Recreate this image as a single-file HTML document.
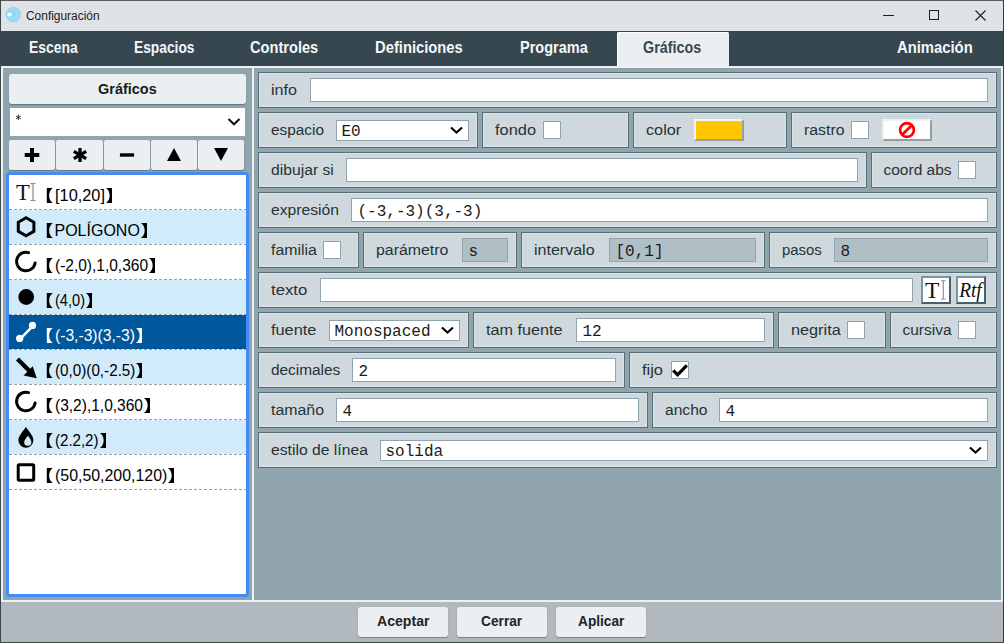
<!DOCTYPE html>
<html><head><meta charset="utf-8"><title>Configuración</title>
<style>html,body{margin:0;padding:0;width:1004px;height:643px;overflow:hidden;position:relative;font-family:"Liberation Sans",sans-serif}</style>
</head><body>
<div style="position:absolute;left:0px;top:0px;width:1004px;height:643px;background:#dfe2e7"></div>
<svg style="position:absolute;left:0;top:0" width="30" height="30"><circle cx="13.3" cy="14.6" r="7.6" fill="#8fd3f4"/><circle cx="13.3" cy="14.6" r="5.6" fill="none" stroke="#b6e3f8" stroke-width="0.8"/><circle cx="13.3" cy="14.6" r="3.6" fill="none" stroke="#b6e3f8" stroke-width="0.8"/><ellipse cx="9.6" cy="14.5" rx="2.4" ry="1.8" fill="#fff"/></svg>
<div style="position:absolute;left:883px;top:15px;width:11px;height:1px;background:#1b1b1b"></div>
<div style="position:absolute;left:929px;top:10px;width:10px;height:10px;box-sizing:border-box;border:1px solid #1b1b1b"></div>
<svg style="position:absolute;left:970;top:5px;left:970px" width="20" height="20"><path d="M5.5 5.5 L15.5 15.5 M15.5 5.5 L5.5 15.5" stroke="#1b1b1b" stroke-width="1.1"/></svg>
<div style="position:absolute;left:1px;top:31px;width:1002px;height:35px;background:#37474f"></div>
<div style="position:absolute;left:617px;top:32px;width:112px;height:34px;background:#eceff1;border-radius:2px 2px 0 0;box-shadow:inset 1px 1px 0 #fff"></div>
<div style="position:absolute;left:1px;top:66px;width:1002px;height:536px;background:#eef1f3"></div>
<div style="position:absolute;left:3px;top:68px;width:249px;height:532px;background:#90a4ae"></div>
<div style="position:absolute;left:254px;top:68px;width:747px;height:532px;background:#90a4ae"></div>
<div style="position:absolute;left:1px;top:602px;width:1002px;height:40px;background:#b1b8be"></div>
<div style="position:absolute;left:0px;top:0px;width:1004px;height:1px;background:#5a5a5a"></div>
<div style="position:absolute;left:0px;top:0px;width:1px;height:643px;background:#3c474c"></div>
<div style="position:absolute;left:1003px;top:0px;width:1px;height:643px;background:#1d3b6e"></div>
<div style="position:absolute;left:0px;top:642px;width:1004px;height:1px;background:#3c474c"></div>
<div style="position:absolute;left:9px;top:74px;width:237px;height:30px;background:#eceff1;border-radius:3px;box-shadow:0 1px 1px rgba(40,60,70,0.45)"></div>
<div style="position:absolute;left:10px;top:108px;width:235px;height:28px;background:#fff"></div>
<svg style="position:absolute;left:14px;top:113px" width="9" height="9"><g stroke="#222" stroke-width="0.9"><path d="M4.4 1.6 V7.2"/><path d="M2 3 L6.8 5.8"/><path d="M2 5.8 L6.8 3"/></g></svg>
<svg style="position:absolute;left:226px;top:115px" width="16" height="14"><path d="M2.5 4 L8 9.3 L13.5 4" fill="none" stroke="#111" stroke-width="2"/></svg>
<div style="position:absolute;left:9px;top:140px;width:46px;height:30px;background:#eceff1;border-radius:2px;box-shadow:0 1px 1px rgba(40,60,70,0.45)"></div>
<div style="position:absolute;left:56px;top:140px;width:47px;height:30px;background:#eceff1;border-radius:2px;box-shadow:0 1px 1px rgba(40,60,70,0.45)"></div>
<div style="position:absolute;left:104px;top:140px;width:46px;height:30px;background:#eceff1;border-radius:2px;box-shadow:0 1px 1px rgba(40,60,70,0.45)"></div>
<div style="position:absolute;left:151px;top:140px;width:46px;height:30px;background:#eceff1;border-radius:2px;box-shadow:0 1px 1px rgba(40,60,70,0.45)"></div>
<div style="position:absolute;left:198px;top:140px;width:46px;height:30px;background:#eceff1;border-radius:2px;box-shadow:0 1px 1px rgba(40,60,70,0.45)"></div>
<svg style="position:absolute;left:20.0px;top:143px" width="24" height="24"><g transform="translate(12 12)"><path d="M-7.3 0 H7.3 M0 -6.9 V6.9" stroke="#000" stroke-width="4"/></g></svg>
<svg style="position:absolute;left:67.5px;top:143px" width="24" height="24"><g transform="translate(12 12)"><g stroke="#000" stroke-width="3.3"><path d="M0 -7 V7"/><path d="M-6.2 -3.6 L6.2 3.6"/><path d="M-6.2 3.6 L6.2 -3.6"/></g></g></svg>
<svg style="position:absolute;left:115.0px;top:143px" width="24" height="24"><g transform="translate(12 12)"><path d="M-7.1 0 H7.1" stroke="#000" stroke-width="3.4"/></g></svg>
<svg style="position:absolute;left:162.0px;top:143px" width="24" height="24"><g transform="translate(12 12)"><path d="M-7 6 L7 6 L0 -7 Z" fill="#000"/></g></svg>
<svg style="position:absolute;left:209.0px;top:143px" width="24" height="24"><g transform="translate(12 12)"><path d="M-7 -7 L7 -7 L0 6 Z" fill="#000"/></g></svg>
<div style="position:absolute;left:6px;top:172px;width:243px;height:425px;box-sizing:border-box;border:3px solid #458bf6;border-radius:4px;background:#fff"></div>
<div style="position:absolute;left:9px;top:175px;width:237px;height:34px;background:#fff"></div>
<div style="position:absolute;left:9px;top:209px;width:237px;height:1px;background:repeating-linear-gradient(90deg,#93a2a9 0 3px,transparent 3px 5px)"></div>
<svg style="position:absolute;left:46px;top:188px" width="8" height="16"><path d="M0.8 0 H6.8 C 1.9 3.5, 1.9 11.5, 6.8 15 H0.8 Z" fill="#000"/></svg>
<svg style="position:absolute;left:105px;top:188px" width="8" height="16"><path d="M7 0 H1 C 5.9 3.5, 5.9 11.5, 1 15 H7 Z" fill="#000"/></svg>
<div style="position:absolute;left:9px;top:210px;width:237px;height:34px;background:#d1ebfa"></div>
<div style="position:absolute;left:9px;top:244px;width:237px;height:1px;background:repeating-linear-gradient(90deg,#93a2a9 0 3px,transparent 3px 5px)"></div>
<svg style="position:absolute;left:46px;top:223px" width="8" height="16"><path d="M0.8 0 H6.8 C 1.9 3.5, 1.9 11.5, 6.8 15 H0.8 Z" fill="#000"/></svg>
<svg style="position:absolute;left:140px;top:223px" width="8" height="16"><path d="M7 0 H1 C 5.9 3.5, 5.9 11.5, 1 15 H7 Z" fill="#000"/></svg>
<div style="position:absolute;left:9px;top:245px;width:237px;height:34px;background:#fff"></div>
<div style="position:absolute;left:9px;top:279px;width:237px;height:1px;background:repeating-linear-gradient(90deg,#93a2a9 0 3px,transparent 3px 5px)"></div>
<svg style="position:absolute;left:46px;top:258px" width="8" height="16"><path d="M0.8 0 H6.8 C 1.9 3.5, 1.9 11.5, 6.8 15 H0.8 Z" fill="#000"/></svg>
<svg style="position:absolute;left:148px;top:258px" width="8" height="16"><path d="M7 0 H1 C 5.9 3.5, 5.9 11.5, 1 15 H7 Z" fill="#000"/></svg>
<div style="position:absolute;left:9px;top:280px;width:237px;height:34px;background:#d1ebfa"></div>
<div style="position:absolute;left:9px;top:314px;width:237px;height:1px;background:repeating-linear-gradient(90deg,#93a2a9 0 3px,transparent 3px 5px)"></div>
<svg style="position:absolute;left:46px;top:293px" width="8" height="16"><path d="M0.8 0 H6.8 C 1.9 3.5, 1.9 11.5, 6.8 15 H0.8 Z" fill="#000"/></svg>
<svg style="position:absolute;left:85px;top:293px" width="8" height="16"><path d="M7 0 H1 C 5.9 3.5, 5.9 11.5, 1 15 H7 Z" fill="#000"/></svg>
<div style="position:absolute;left:9px;top:315px;width:237px;height:34px;background:#01579b"></div>
<div style="position:absolute;left:9px;top:349px;width:237px;height:1px;background:repeating-linear-gradient(90deg,#93a2a9 0 3px,transparent 3px 5px)"></div>
<svg style="position:absolute;left:46px;top:328px" width="8" height="16"><path d="M0.8 0 H6.8 C 1.9 3.5, 1.9 11.5, 6.8 15 H0.8 Z" fill="#fff"/></svg>
<svg style="position:absolute;left:134.9px;top:328px" width="8" height="16"><path d="M7 0 H1 C 5.9 3.5, 5.9 11.5, 1 15 H7 Z" fill="#fff"/></svg>
<div style="position:absolute;left:9px;top:350px;width:237px;height:34px;background:#d1ebfa"></div>
<div style="position:absolute;left:9px;top:384px;width:237px;height:1px;background:repeating-linear-gradient(90deg,#93a2a9 0 3px,transparent 3px 5px)"></div>
<svg style="position:absolute;left:46px;top:363px" width="8" height="16"><path d="M0.8 0 H6.8 C 1.9 3.5, 1.9 11.5, 6.8 15 H0.8 Z" fill="#000"/></svg>
<svg style="position:absolute;left:135.4px;top:363px" width="8" height="16"><path d="M7 0 H1 C 5.9 3.5, 5.9 11.5, 1 15 H7 Z" fill="#000"/></svg>
<div style="position:absolute;left:9px;top:385px;width:237px;height:34px;background:#fff"></div>
<div style="position:absolute;left:9px;top:419px;width:237px;height:1px;background:repeating-linear-gradient(90deg,#93a2a9 0 3px,transparent 3px 5px)"></div>
<svg style="position:absolute;left:46px;top:398px" width="8" height="16"><path d="M0.8 0 H6.8 C 1.9 3.5, 1.9 11.5, 6.8 15 H0.8 Z" fill="#000"/></svg>
<svg style="position:absolute;left:143px;top:398px" width="8" height="16"><path d="M7 0 H1 C 5.9 3.5, 5.9 11.5, 1 15 H7 Z" fill="#000"/></svg>
<div style="position:absolute;left:9px;top:420px;width:237px;height:34px;background:#d1ebfa"></div>
<div style="position:absolute;left:9px;top:454px;width:237px;height:1px;background:repeating-linear-gradient(90deg,#93a2a9 0 3px,transparent 3px 5px)"></div>
<svg style="position:absolute;left:46px;top:433px" width="8" height="16"><path d="M0.8 0 H6.8 C 1.9 3.5, 1.9 11.5, 6.8 15 H0.8 Z" fill="#000"/></svg>
<svg style="position:absolute;left:98.5px;top:433px" width="8" height="16"><path d="M7 0 H1 C 5.9 3.5, 5.9 11.5, 1 15 H7 Z" fill="#000"/></svg>
<div style="position:absolute;left:9px;top:455px;width:237px;height:34px;background:#fff"></div>
<div style="position:absolute;left:9px;top:489px;width:237px;height:1px;background:repeating-linear-gradient(90deg,#93a2a9 0 3px,transparent 3px 5px)"></div>
<svg style="position:absolute;left:46px;top:468px" width="8" height="16"><path d="M0.8 0 H6.8 C 1.9 3.5, 1.9 11.5, 6.8 15 H0.8 Z" fill="#000"/></svg>
<svg style="position:absolute;left:167.3px;top:468px" width="8" height="16"><path d="M7 0 H1 C 5.9 3.5, 5.9 11.5, 1 15 H7 Z" fill="#000"/></svg>
<svg style="position:absolute;left:9px;top:175px" width="36" height="34"><text x="6.9" y="25" font-family="Liberation Serif" font-size="22.5" fill="#111">T</text><path d="M21.5 8.5 H26.5 M24 8.5 V25.5 M21.5 25.5 H26.5" stroke="#8c8c8c" stroke-width="1.2" fill="none"/></svg>
<svg style="position:absolute;left:9px;top:210px" width="36" height="34"><path d="M17.1 7.8 L24.9 12.3 L24.9 21.3 L17.1 25.8 L9.3 21.3 L9.3 12.3 Z" fill="none" stroke="#000" stroke-width="3" stroke-linejoin="miter"/></svg>
<svg style="position:absolute;left:9px;top:245px" width="36" height="34"><path d="M19.6 7.6 A9.3 9.3 0 1 0 26.1 17.9" fill="none" stroke="#000" stroke-width="3" stroke-linecap="round"/></svg>
<svg style="position:absolute;left:9px;top:280px" width="36" height="34"><circle cx="17.2" cy="17" r="7.9" fill="#000"/></svg>
<svg style="position:absolute;left:9px;top:315px" width="36" height="34"><path d="M10.7 24.4 L23.5 11.4" stroke="#fff" stroke-width="2.6"/><circle cx="10.7" cy="23.4" r="3.6" fill="#fff"/><circle cx="23.5" cy="10.4" r="3.6" fill="#fff"/></svg>
<svg style="position:absolute;left:9px;top:350px" width="36" height="34"><path d="M8.5 9 L20 20.5" stroke="#000" stroke-width="4.2"/><path d="M14.6 25.6 L23.7 16.3 L27.7 28.3 Z" fill="#000"/></svg>
<svg style="position:absolute;left:9px;top:385px" width="36" height="34"><path d="M19.6 7.6 A9.3 9.3 0 1 0 26.1 17.9" fill="none" stroke="#000" stroke-width="3" stroke-linecap="round"/></svg>
<svg style="position:absolute;left:9px;top:420px" width="36" height="34"><path d="M16.9 7 C 13 12.5, 9.4 16.5, 9.4 20.2 A7.5 7.5 0 0 0 24.4 20.2 C 24.4 16.5, 20.8 12.5, 16.9 7 Z" fill="#000"/><path d="M19 15.8 C 17 18.5, 15.2 20.2, 15.2 22.2 A3.6 3.6 0 0 0 22.4 22.2 C 22.4 20.2, 20.9 18.5, 19 15.8 Z" fill="#d1ebfa"/></svg>
<svg style="position:absolute;left:9px;top:455px" width="36" height="34"><rect x="9.2" y="9.8" width="15.5" height="15.5" rx="1" fill="none" stroke="#000" stroke-width="3"/></svg>
<div style="position:absolute;left:258px;top:72px;width:739px;height:36px;box-sizing:border-box;background:#cfd8dc;border:1px solid #546e7a;box-shadow:inset 1px 1px 0 #dde4e7, inset -1px -1px 0 #dde4e7"></div>
<div style="position:absolute;left:310px;top:78px;width:678px;height:24px;box-sizing:border-box;background:#fff;border:1px solid #90a4ae"></div>
<div style="position:absolute;left:258px;top:112px;width:220px;height:36px;box-sizing:border-box;background:#cfd8dc;border:1px solid #546e7a;box-shadow:inset 1px 1px 0 #dde4e7, inset -1px -1px 0 #dde4e7"></div>
<div style="position:absolute;left:336px;top:120px;width:133px;height:21px;box-sizing:border-box;background:#fff;border:1px solid #90a4ae"></div>
<svg style="position:absolute;left:449px;top:124px" width="16" height="14"><path d="M2 3.5 L7.5 8.5 L13 3.5" fill="none" stroke="#000" stroke-width="2.1"/></svg>
<div style="position:absolute;left:482px;top:112px;width:147px;height:36px;box-sizing:border-box;background:#cfd8dc;border:1px solid #546e7a;box-shadow:inset 1px 1px 0 #dde4e7, inset -1px -1px 0 #dde4e7"></div>
<div style="position:absolute;left:543px;top:121px;width:18px;height:18px;box-sizing:border-box;background:#fff;border:1px solid #90a4ae"></div>
<div style="position:absolute;left:633px;top:112px;width:154px;height:36px;box-sizing:border-box;background:#cfd8dc;border:1px solid #546e7a;box-shadow:inset 1px 1px 0 #dde4e7, inset -1px -1px 0 #dde4e7"></div>
<div style="position:absolute;left:694px;top:119px;width:50px;height:22px;box-sizing:border-box;background:#ffc600;border:2px solid;border-color:#f2f4f7 #989ea4 #989ea4 #f2f4f7"></div>
<div style="position:absolute;left:791px;top:112px;width:206px;height:36px;box-sizing:border-box;background:#cfd8dc;border:1px solid #546e7a;box-shadow:inset 1px 1px 0 #dde4e7, inset -1px -1px 0 #dde4e7"></div>
<div style="position:absolute;left:851px;top:121px;width:18px;height:18px;box-sizing:border-box;background:#fff;border:1px solid #90a4ae"></div>
<div style="position:absolute;left:882px;top:119px;width:50px;height:22px;box-sizing:border-box;background:#fff;border:2px solid;border-color:#eef0f1 #9a9c9e #9a9c9e #eef0f1"></div>
<svg style="position:absolute;left:897px;top:120px" width="20" height="20"><circle cx="10" cy="10" r="6.9" fill="none" stroke="#f00" stroke-width="2.7"/><path d="M14.8 5.2 L5.2 14.8" stroke="#f00" stroke-width="2.7"/></svg>
<div style="position:absolute;left:258px;top:152px;width:609px;height:36px;box-sizing:border-box;background:#cfd8dc;border:1px solid #546e7a;box-shadow:inset 1px 1px 0 #dde4e7, inset -1px -1px 0 #dde4e7"></div>
<div style="position:absolute;left:346px;top:158px;width:512px;height:24px;box-sizing:border-box;background:#fff;border:1px solid #90a4ae"></div>
<div style="position:absolute;left:871px;top:152px;width:126px;height:36px;box-sizing:border-box;background:#cfd8dc;border:1px solid #546e7a;box-shadow:inset 1px 1px 0 #dde4e7, inset -1px -1px 0 #dde4e7"></div>
<div style="position:absolute;left:958px;top:161px;width:18px;height:18px;box-sizing:border-box;background:#fff;border:1px solid #90a4ae"></div>
<div style="position:absolute;left:258px;top:192px;width:739px;height:36px;box-sizing:border-box;background:#cfd8dc;border:1px solid #546e7a;box-shadow:inset 1px 1px 0 #dde4e7, inset -1px -1px 0 #dde4e7"></div>
<div style="position:absolute;left:351px;top:198px;width:637px;height:24px;box-sizing:border-box;background:#fff;border:1px solid #90a4ae"></div>
<div style="position:absolute;left:258px;top:232px;width:101px;height:36px;box-sizing:border-box;background:#cfd8dc;border:1px solid #546e7a;box-shadow:inset 1px 1px 0 #dde4e7, inset -1px -1px 0 #dde4e7"></div>
<div style="position:absolute;left:323px;top:241px;width:18px;height:18px;box-sizing:border-box;background:#fff;border:1px solid #90a4ae"></div>
<div style="position:absolute;left:363px;top:232px;width:154px;height:36px;box-sizing:border-box;background:#cfd8dc;border:1px solid #546e7a;box-shadow:inset 1px 1px 0 #dde4e7, inset -1px -1px 0 #dde4e7"></div>
<div style="position:absolute;left:462px;top:238px;width:46px;height:24px;box-sizing:border-box;background:#b0bec5;border:1px solid #90a4ae"></div>
<div style="position:absolute;left:521px;top:232px;width:244px;height:36px;box-sizing:border-box;background:#cfd8dc;border:1px solid #546e7a;box-shadow:inset 1px 1px 0 #dde4e7, inset -1px -1px 0 #dde4e7"></div>
<div style="position:absolute;left:609px;top:238px;width:147px;height:24px;box-sizing:border-box;background:#b0bec5;border:1px solid #90a4ae"></div>
<div style="position:absolute;left:769px;top:232px;width:228px;height:36px;box-sizing:border-box;background:#cfd8dc;border:1px solid #546e7a;box-shadow:inset 1px 1px 0 #dde4e7, inset -1px -1px 0 #dde4e7"></div>
<div style="position:absolute;left:834px;top:238px;width:154px;height:24px;box-sizing:border-box;background:#b0bec5;border:1px solid #90a4ae"></div>
<div style="position:absolute;left:258px;top:272px;width:739px;height:36px;box-sizing:border-box;background:#cfd8dc;border:1px solid #546e7a;box-shadow:inset 1px 1px 0 #dde4e7, inset -1px -1px 0 #dde4e7"></div>
<div style="position:absolute;left:320px;top:278px;width:593px;height:24px;box-sizing:border-box;background:#fff;border:1px solid #90a4ae"></div>
<div style="position:absolute;left:921px;top:276px;width:30px;height:28px;box-sizing:border-box;background:#fff;border:2px solid;border-color:#7d95a0 #4a5f69 #4a5f69 #7d95a0"></div>
<svg style="position:absolute;left:921px;top:276px" width="30" height="28"><text x="4" y="21.6" font-family="Liberation Serif" font-size="23.5" fill="#111">T</text><path d="M20 4.8 H24.5 M22.3 4.8 V23 M20 23 H24.5" stroke="#8a8a8a" stroke-width="1.1" fill="none"/></svg>
<div style="position:absolute;left:956px;top:276px;width:30px;height:28px;box-sizing:border-box;background:#fff;border:2px solid;border-color:#7d95a0 #4a5f69 #4a5f69 #7d95a0"></div>
<svg style="position:absolute;left:956px;top:276px" width="30" height="28"><text x="3.2" y="21" font-family="Liberation Serif" font-style="italic" font-size="20" fill="#111" textLength="22.5" lengthAdjust="spacingAndGlyphs">Rtf</text></svg>
<div style="position:absolute;left:258px;top:312px;width:211px;height:36px;box-sizing:border-box;background:#cfd8dc;border:1px solid #546e7a;box-shadow:inset 1px 1px 0 #dde4e7, inset -1px -1px 0 #dde4e7"></div>
<div style="position:absolute;left:329px;top:320px;width:131px;height:21px;box-sizing:border-box;background:#fff;border:1px solid #90a4ae"></div>
<svg style="position:absolute;left:440px;top:324px" width="16" height="14"><path d="M2 3.5 L7.5 8.5 L13 3.5" fill="none" stroke="#000" stroke-width="2.1"/></svg>
<div style="position:absolute;left:473px;top:312px;width:301px;height:36px;box-sizing:border-box;background:#cfd8dc;border:1px solid #546e7a;box-shadow:inset 1px 1px 0 #dde4e7, inset -1px -1px 0 #dde4e7"></div>
<div style="position:absolute;left:576px;top:318px;width:189px;height:24px;box-sizing:border-box;background:#fff;border:1px solid #90a4ae"></div>
<div style="position:absolute;left:778px;top:312px;width:108px;height:36px;box-sizing:border-box;background:#cfd8dc;border:1px solid #546e7a;box-shadow:inset 1px 1px 0 #dde4e7, inset -1px -1px 0 #dde4e7"></div>
<div style="position:absolute;left:847px;top:321px;width:18px;height:18px;box-sizing:border-box;background:#fff;border:1px solid #90a4ae"></div>
<div style="position:absolute;left:890px;top:312px;width:107px;height:36px;box-sizing:border-box;background:#cfd8dc;border:1px solid #546e7a;box-shadow:inset 1px 1px 0 #dde4e7, inset -1px -1px 0 #dde4e7"></div>
<div style="position:absolute;left:958px;top:321px;width:18px;height:18px;box-sizing:border-box;background:#fff;border:1px solid #90a4ae"></div>
<div style="position:absolute;left:258px;top:352px;width:367px;height:36px;box-sizing:border-box;background:#cfd8dc;border:1px solid #546e7a;box-shadow:inset 1px 1px 0 #dde4e7, inset -1px -1px 0 #dde4e7"></div>
<div style="position:absolute;left:352px;top:358px;width:264px;height:24px;box-sizing:border-box;background:#fff;border:1px solid #90a4ae"></div>
<div style="position:absolute;left:629px;top:352px;width:368px;height:36px;box-sizing:border-box;background:#cfd8dc;border:1px solid #546e7a;box-shadow:inset 1px 1px 0 #dde4e7, inset -1px -1px 0 #dde4e7"></div>
<div style="position:absolute;left:671px;top:361px;width:18px;height:18px;box-sizing:border-box;background:#fff;border:1px solid #90a4ae"></div>
<svg style="position:absolute;left:671px;top:361px" width="18" height="18"><path d="M2.2 9.3 L6.6 13.8 L15.8 4.3" fill="none" stroke="#000" stroke-width="3.2"/></svg>
<div style="position:absolute;left:258px;top:392px;width:390px;height:36px;box-sizing:border-box;background:#cfd8dc;border:1px solid #546e7a;box-shadow:inset 1px 1px 0 #dde4e7, inset -1px -1px 0 #dde4e7"></div>
<div style="position:absolute;left:336px;top:398px;width:303px;height:24px;box-sizing:border-box;background:#fff;border:1px solid #90a4ae"></div>
<div style="position:absolute;left:652px;top:392px;width:345px;height:36px;box-sizing:border-box;background:#cfd8dc;border:1px solid #546e7a;box-shadow:inset 1px 1px 0 #dde4e7, inset -1px -1px 0 #dde4e7"></div>
<div style="position:absolute;left:719px;top:398px;width:269px;height:24px;box-sizing:border-box;background:#fff;border:1px solid #90a4ae"></div>
<div style="position:absolute;left:258px;top:432px;width:739px;height:36px;box-sizing:border-box;background:#cfd8dc;border:1px solid #546e7a;box-shadow:inset 1px 1px 0 #dde4e7, inset -1px -1px 0 #dde4e7"></div>
<div style="position:absolute;left:380px;top:440px;width:608px;height:21px;box-sizing:border-box;background:#fff;border:1px solid #90a4ae"></div>
<svg style="position:absolute;left:968px;top:444px" width="16" height="14"><path d="M2 3.5 L7.5 8.5 L13 3.5" fill="none" stroke="#000" stroke-width="2.1"/></svg>
<div style="position:absolute;left:358px;top:607px;width:90px;height:30px;background:#eceff1;border-radius:3px;box-shadow:0 1px 1px rgba(40,60,70,0.45)"></div>
<div style="position:absolute;left:457px;top:607px;width:90px;height:30px;background:#eceff1;border-radius:3px;box-shadow:0 1px 1px rgba(40,60,70,0.45)"></div>
<div style="position:absolute;left:556px;top:607px;width:90px;height:30px;background:#eceff1;border-radius:3px;box-shadow:0 1px 1px rgba(40,60,70,0.45)"></div>
<div style="position:absolute;left:25.80px;top:9.54px;font-family:'Liberation Sans', sans-serif;font-size:12px;font-weight:400;color:#1b1b1b;white-space:pre;line-height:1;transform:scaleX(0.9940);transform-origin:0 0">Configuración</div>
<div style="position:absolute;left:28.70px;top:39.23px;font-family:'Liberation Sans', sans-serif;font-size:16.5px;font-weight:700;color:#f5f7f8;white-space:pre;line-height:1;transform:scaleX(0.8426);transform-origin:0 0">Escena</div>
<div style="position:absolute;left:134.00px;top:39.23px;font-family:'Liberation Sans', sans-serif;font-size:16.5px;font-weight:700;color:#f5f7f8;white-space:pre;line-height:1;transform:scaleX(0.8348);transform-origin:0 0">Espacios</div>
<div style="position:absolute;left:250.30px;top:39.23px;font-family:'Liberation Sans', sans-serif;font-size:16.5px;font-weight:700;color:#f5f7f8;white-space:pre;line-height:1;transform:scaleX(0.8855);transform-origin:0 0">Controles</div>
<div style="position:absolute;left:375.40px;top:39.23px;font-family:'Liberation Sans', sans-serif;font-size:16.5px;font-weight:700;color:#f5f7f8;white-space:pre;line-height:1;transform:scaleX(0.8949);transform-origin:0 0">Definiciones</div>
<div style="position:absolute;left:519.50px;top:39.23px;font-family:'Liberation Sans', sans-serif;font-size:16.5px;font-weight:700;color:#f5f7f8;white-space:pre;line-height:1;transform:scaleX(0.8802);transform-origin:0 0">Programa</div>
<div style="position:absolute;left:643.40px;top:39.23px;font-family:'Liberation Sans', sans-serif;font-size:16.5px;font-weight:700;color:#37474f;white-space:pre;line-height:1;transform:scaleX(0.8678);transform-origin:0 0">Gráficos</div>
<div style="position:absolute;left:897.10px;top:39.23px;font-family:'Liberation Sans', sans-serif;font-size:16.5px;font-weight:700;color:#f5f7f8;white-space:pre;line-height:1;transform:scaleX(0.8974);transform-origin:0 0">Animación</div>
<div style="position:absolute;left:97.50px;top:80.68px;font-family:'Liberation Sans', sans-serif;font-size:15.5px;font-weight:700;color:#161c20;white-space:pre;line-height:1;transform:scaleX(0.9334);transform-origin:0 0">Gráficos</div>
<div style="position:absolute;left:54.50px;top:187.75px;font-family:'Liberation Sans', sans-serif;font-size:16px;font-weight:400;color:#000;white-space:pre;line-height:1;transform:scaleX(1.0217);transform-origin:0 0">[10,20]</div>
<div style="position:absolute;left:54.50px;top:222.75px;font-family:'Liberation Sans', sans-serif;font-size:16px;font-weight:400;color:#000;white-space:pre;line-height:1">POLÍGONO</div>
<div style="position:absolute;left:54.50px;top:257.75px;font-family:'Liberation Sans', sans-serif;font-size:16px;font-weight:400;color:#000;white-space:pre;line-height:1;transform:scaleX(0.9681);transform-origin:0 0">(-2,0),1,0,360</div>
<div style="position:absolute;left:54.50px;top:292.75px;font-family:'Liberation Sans', sans-serif;font-size:16px;font-weight:400;color:#000;white-space:pre;line-height:1;transform:scaleX(0.9117);transform-origin:0 0">(4,0)</div>
<div style="position:absolute;left:54.50px;top:327.75px;font-family:'Liberation Sans', sans-serif;font-size:16px;font-weight:400;color:#fff;white-space:pre;line-height:1;transform:scaleX(0.9770);transform-origin:0 0">(-3,-3)(3,-3)</div>
<div style="position:absolute;left:54.50px;top:362.75px;font-family:'Liberation Sans', sans-serif;font-size:16px;font-weight:400;color:#000;white-space:pre;line-height:1;transform:scaleX(0.9518);transform-origin:0 0">(0,0)(0,-2.5)</div>
<div style="position:absolute;left:54.50px;top:397.75px;font-family:'Liberation Sans', sans-serif;font-size:16px;font-weight:400;color:#000;white-space:pre;line-height:1;transform:scaleX(0.9699);transform-origin:0 0">(3,2),1,0,360</div>
<div style="position:absolute;left:54.50px;top:432.75px;font-family:'Liberation Sans', sans-serif;font-size:16px;font-weight:400;color:#000;white-space:pre;line-height:1;transform:scaleX(0.9405);transform-origin:0 0">(2.2,2)</div>
<div style="position:absolute;left:54.50px;top:467.75px;font-family:'Liberation Sans', sans-serif;font-size:16px;font-weight:400;color:#000;white-space:pre;line-height:1;transform:scaleX(0.9939);transform-origin:0 0">(50,50,200,120)</div>
<div style="position:absolute;left:270.50px;top:81.88px;font-family:'Liberation Sans', sans-serif;font-size:15.5px;font-weight:400;color:#263238;white-space:pre;line-height:1;transform:scaleX(1.0400);transform-origin:0 0">info</div>
<div style="position:absolute;left:270.50px;top:121.88px;font-family:'Liberation Sans', sans-serif;font-size:15.5px;font-weight:400;color:#263238;white-space:pre;line-height:1;transform:scaleX(0.9918);transform-origin:0 0">espacio</div>
<div style="position:absolute;left:341.50px;top:123.74px;font-family:'Liberation Mono', monospace;font-size:16px;font-weight:400;color:#1a1a1a;white-space:pre;line-height:1">E0</div>
<div style="position:absolute;left:494.50px;top:121.88px;font-family:'Liberation Sans', sans-serif;font-size:15.5px;font-weight:400;color:#263238;white-space:pre;line-height:1;transform:scaleX(1.0568);transform-origin:0 0">fondo</div>
<div style="position:absolute;left:645.50px;top:121.88px;font-family:'Liberation Sans', sans-serif;font-size:15.5px;font-weight:400;color:#263238;white-space:pre;line-height:1;transform:scaleX(1.0473);transform-origin:0 0">color</div>
<div style="position:absolute;left:803.50px;top:121.88px;font-family:'Liberation Sans', sans-serif;font-size:15.5px;font-weight:400;color:#263238;white-space:pre;line-height:1;transform:scaleX(1.0221);transform-origin:0 0">rastro</div>
<div style="position:absolute;left:270.50px;top:161.88px;font-family:'Liberation Sans', sans-serif;font-size:15.5px;font-weight:400;color:#263238;white-space:pre;line-height:1;transform:scaleX(1.0124);transform-origin:0 0">dibujar si</div>
<div style="position:absolute;left:883.50px;top:161.88px;font-family:'Liberation Sans', sans-serif;font-size:15.5px;font-weight:400;color:#263238;white-space:pre;line-height:1">coord abs</div>
<div style="position:absolute;left:270.50px;top:201.88px;font-family:'Liberation Sans', sans-serif;font-size:15.5px;font-weight:400;color:#263238;white-space:pre;line-height:1;transform:scaleX(1.0116);transform-origin:0 0">expresión</div>
<div style="position:absolute;left:357.50px;top:203.74px;font-family:'Liberation Mono', monospace;font-size:16px;font-weight:400;color:#1a1a1a;white-space:pre;line-height:1">(-3,-3)(3,-3)</div>
<div style="position:absolute;left:270.50px;top:241.88px;font-family:'Liberation Sans', sans-serif;font-size:15.5px;font-weight:400;color:#263238;white-space:pre;line-height:1;transform:scaleX(1.0224);transform-origin:0 0">familia</div>
<div style="position:absolute;left:375.50px;top:241.88px;font-family:'Liberation Sans', sans-serif;font-size:15.5px;font-weight:400;color:#263238;white-space:pre;line-height:1;transform:scaleX(1.0233);transform-origin:0 0">parámetro</div>
<div style="position:absolute;left:468.50px;top:243.74px;font-family:'Liberation Mono', monospace;font-size:16px;font-weight:400;color:#1a1a1a;white-space:pre;line-height:1">s</div>
<div style="position:absolute;left:533.50px;top:241.88px;font-family:'Liberation Sans', sans-serif;font-size:15.5px;font-weight:400;color:#263238;white-space:pre;line-height:1;transform:scaleX(1.0342);transform-origin:0 0">intervalo</div>
<div style="position:absolute;left:615.50px;top:243.74px;font-family:'Liberation Mono', monospace;font-size:16px;font-weight:400;color:#1a1a1a;white-space:pre;line-height:1">[0,1]</div>
<div style="position:absolute;left:781.50px;top:241.88px;font-family:'Liberation Sans', sans-serif;font-size:15.5px;font-weight:400;color:#263238;white-space:pre;line-height:1;transform:scaleX(0.9619);transform-origin:0 0">pasos</div>
<div style="position:absolute;left:840.50px;top:243.74px;font-family:'Liberation Mono', monospace;font-size:16px;font-weight:400;color:#1a1a1a;white-space:pre;line-height:1">8</div>
<div style="position:absolute;left:270.50px;top:281.88px;font-family:'Liberation Sans', sans-serif;font-size:15.5px;font-weight:400;color:#263238;white-space:pre;line-height:1;transform:scaleX(1.0801);transform-origin:0 0">texto</div>
<div style="position:absolute;left:270.50px;top:321.88px;font-family:'Liberation Sans', sans-serif;font-size:15.5px;font-weight:400;color:#263238;white-space:pre;line-height:1;transform:scaleX(1.0531);transform-origin:0 0">fuente</div>
<div style="position:absolute;left:334.50px;top:323.74px;font-family:'Liberation Mono', monospace;font-size:16px;font-weight:400;color:#1a1a1a;white-space:pre;line-height:1">Monospaced</div>
<div style="position:absolute;left:485.50px;top:321.88px;font-family:'Liberation Sans', sans-serif;font-size:15.5px;font-weight:400;color:#263238;white-space:pre;line-height:1;transform:scaleX(1.0444);transform-origin:0 0">tam fuente</div>
<div style="position:absolute;left:582.50px;top:323.74px;font-family:'Liberation Mono', monospace;font-size:16px;font-weight:400;color:#1a1a1a;white-space:pre;line-height:1">12</div>
<div style="position:absolute;left:790.50px;top:321.88px;font-family:'Liberation Sans', sans-serif;font-size:15.5px;font-weight:400;color:#263238;white-space:pre;line-height:1;transform:scaleX(1.0484);transform-origin:0 0">negrita</div>
<div style="position:absolute;left:902.50px;top:321.88px;font-family:'Liberation Sans', sans-serif;font-size:15.5px;font-weight:400;color:#263238;white-space:pre;line-height:1">cursiva</div>
<div style="position:absolute;left:270.50px;top:361.88px;font-family:'Liberation Sans', sans-serif;font-size:15.5px;font-weight:400;color:#263238;white-space:pre;line-height:1;transform:scaleX(0.9931);transform-origin:0 0">decimales</div>
<div style="position:absolute;left:358.50px;top:363.74px;font-family:'Liberation Mono', monospace;font-size:16px;font-weight:400;color:#1a1a1a;white-space:pre;line-height:1">2</div>
<div style="position:absolute;left:641.50px;top:361.88px;font-family:'Liberation Sans', sans-serif;font-size:15.5px;font-weight:400;color:#263238;white-space:pre;line-height:1;transform:scaleX(1.0591);transform-origin:0 0">fijo</div>
<div style="position:absolute;left:270.50px;top:401.88px;font-family:'Liberation Sans', sans-serif;font-size:15.5px;font-weight:400;color:#263238;white-space:pre;line-height:1;transform:scaleX(1.0251);transform-origin:0 0">tamaño</div>
<div style="position:absolute;left:342.50px;top:403.74px;font-family:'Liberation Mono', monospace;font-size:16px;font-weight:400;color:#1a1a1a;white-space:pre;line-height:1">4</div>
<div style="position:absolute;left:664.50px;top:401.88px;font-family:'Liberation Sans', sans-serif;font-size:15.5px;font-weight:400;color:#263238;white-space:pre;line-height:1;transform:scaleX(1.0063);transform-origin:0 0">ancho</div>
<div style="position:absolute;left:725.50px;top:403.74px;font-family:'Liberation Mono', monospace;font-size:16px;font-weight:400;color:#1a1a1a;white-space:pre;line-height:1">4</div>
<div style="position:absolute;left:270.50px;top:441.88px;font-family:'Liberation Sans', sans-serif;font-size:15.5px;font-weight:400;color:#263238;white-space:pre;line-height:1;transform:scaleX(1.0130);transform-origin:0 0">estilo de línea</div>
<div style="position:absolute;left:385.50px;top:443.74px;font-family:'Liberation Mono', monospace;font-size:16px;font-weight:400;color:#1a1a1a;white-space:pre;line-height:1">solida</div>
<div style="position:absolute;left:376.75px;top:613.30px;font-family:'Liberation Sans', sans-serif;font-size:15px;font-weight:700;color:#1c2429;white-space:pre;line-height:1;transform:scaleX(0.9399);transform-origin:0 0">Aceptar</div>
<div style="position:absolute;left:481.40px;top:613.30px;font-family:'Liberation Sans', sans-serif;font-size:15px;font-weight:700;color:#1c2429;white-space:pre;line-height:1;transform:scaleX(0.9149);transform-origin:0 0">Cerrar</div>
<div style="position:absolute;left:577.80px;top:613.30px;font-family:'Liberation Sans', sans-serif;font-size:15px;font-weight:700;color:#1c2429;white-space:pre;line-height:1;transform:scaleX(0.9123);transform-origin:0 0">Aplicar</div>
</body></html>
